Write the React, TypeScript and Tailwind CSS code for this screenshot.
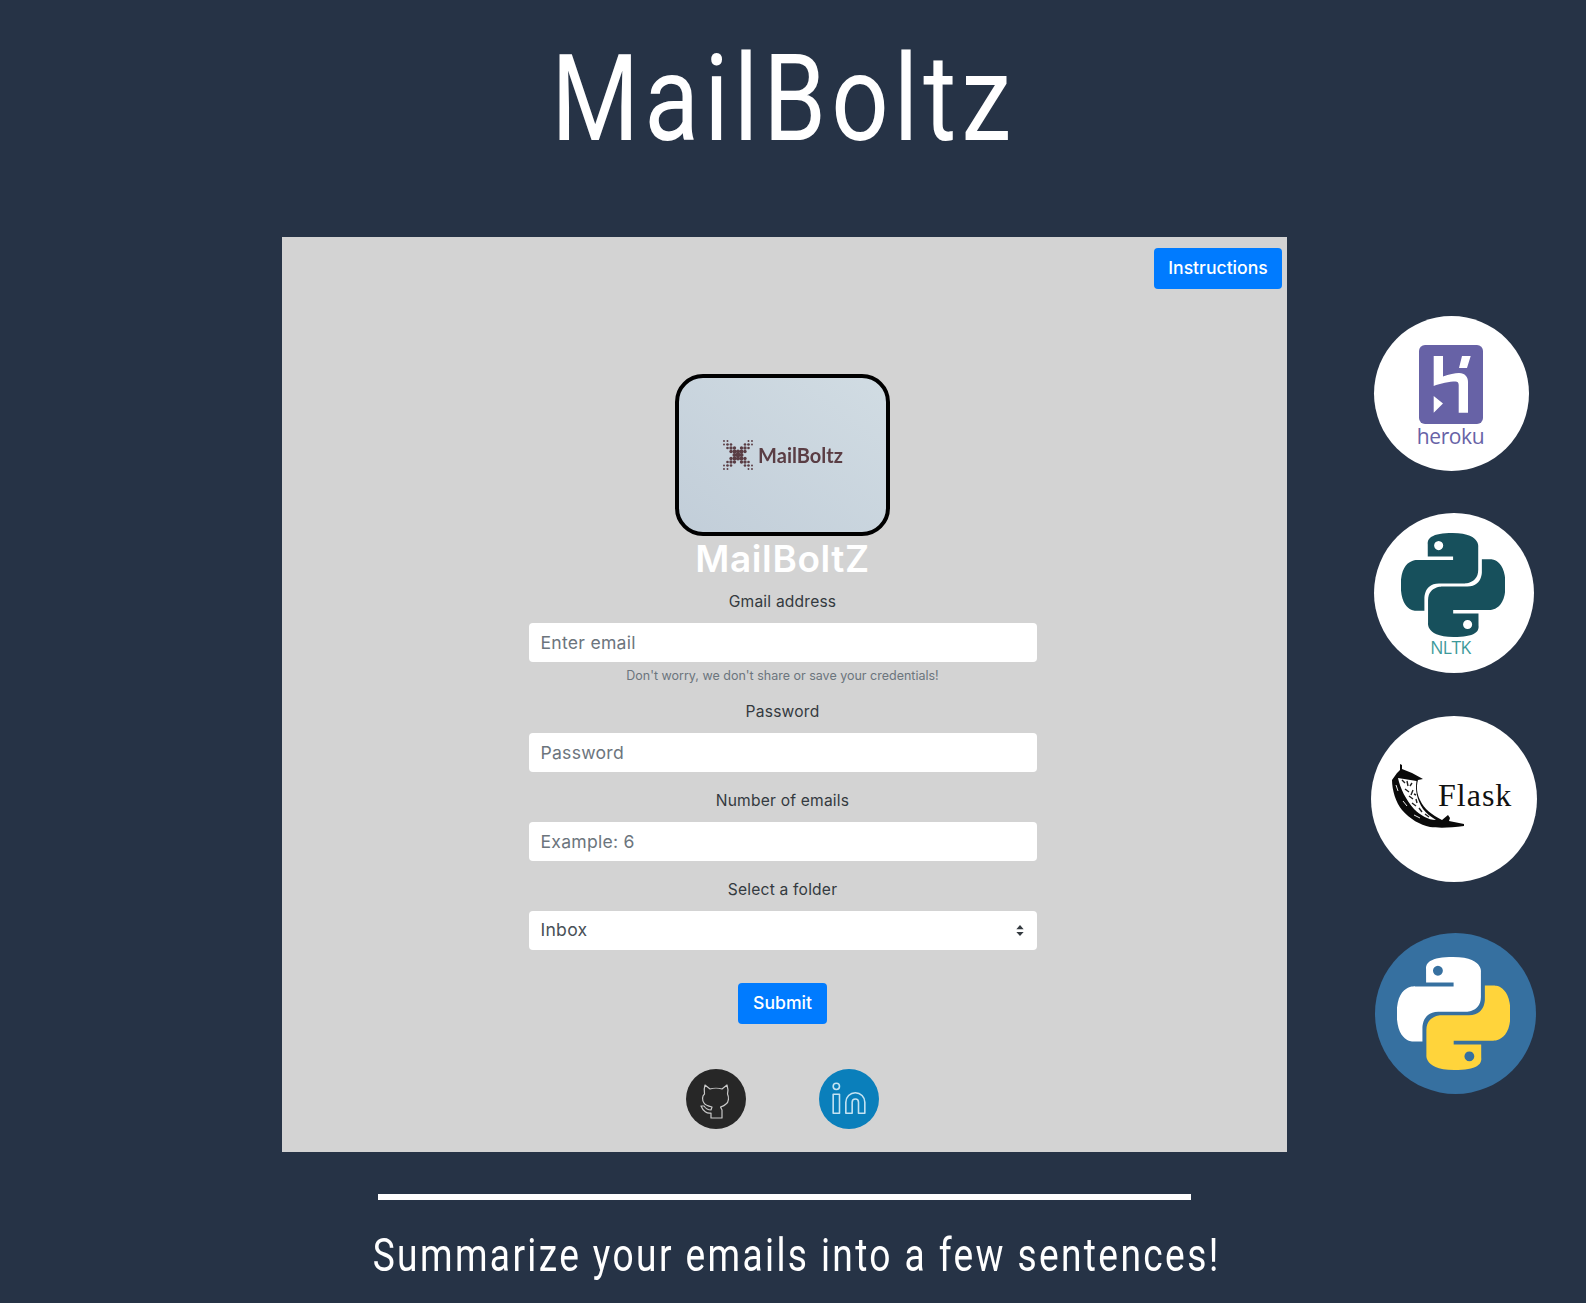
import React from "react";
import { Linkedin } from "lucide-react";

const PY_TOP =
  "M14.25.18l.9.2.73.26.59.3.45.32.34.34.25.34.16.33.1.3.04.26.02.2-.01.13V8.5l-.05.63-.13.55-.21.46-.26.38-.3.31-.33.25-.35.19-.35.14-.33.1-.3.07-.26.04-.21.02H8.77l-.69.05-.59.14-.5.22-.41.27-.33.32-.27.35-.2.36-.15.37-.1.35-.07.32-.04.27-.02.21v3.06H3.17l-.21-.03-.28-.07-.32-.12-.35-.18-.36-.26-.36-.36-.35-.46-.32-.59-.28-.73-.21-.88-.14-1.05-.05-1.23.06-1.22.16-1.04.24-.87.32-.71.36-.57.4-.44.42-.33.42-.24.4-.16.36-.1.32-.05.24-.01h.16l.06.01h8.16v-.83H6.18l-.01-2.75-.02-.37.05-.34.11-.31.17-.28.25-.26.31-.23.38-.2.44-.18.51-.15.58-.12.64-.1.71-.06.77-.04.84-.02 1.27.05zm-6.3 1.98l-.23.33-.08.41.08.41.23.34.33.22.41.09.41-.09.33-.22.23-.34.08-.41-.08-.41-.23-.33-.33-.22-.41-.09-.41.09z";
const PY_BOTTOM =
  "M21.1 6.11l.28.06.32.12.35.18.36.27.36.35.35.47.32.59.28.73.21.88.14 1.04.05 1.23-.06 1.23-.16 1.04-.24.86-.32.71-.36.57-.4.45-.42.33-.42.24-.4.16-.36.09-.32.05-.24.02-.16-.01h-8.22v.82h5.84l.01 2.76.02.36-.05.34-.11.31-.17.29-.25.25-.31.24-.38.2-.44.17-.51.15-.58.13-.64.09-.71.07-.77.04-.84.01-1.27-.04-1.07-.14-.9-.2-.73-.25-.59-.3-.45-.33-.34-.34-.25-.34-.16-.33-.1-.3-.04-.25-.02-.2.01-.13v-5.34l.05-.64.13-.54.21-.46.26-.38.3-.32.33-.24.35-.2.35-.14.33-.1.3-.06.26-.04.21-.02.13-.01h5.84l.69-.05.59-.14.5-.21.41-.28.33-.32.27-.35.2-.36.15-.36.1-.35.07-.32.04-.28.02-.21V6.07h2.09l.14.01zm-6.47 14.25l-.23.33-.08.41.08.41.23.33.33.23.41.08.41-.08.33-.23.23-.33.08-.41-.08-.41-.23-.33-.33-.23-.41-.08-.41.08z";

const PythonMark = ({ top, bottom, className }: { top: string; bottom: string; className: string }) => (
  <svg viewBox="0 0 24 24" className={className}>
    <path d={PY_TOP} fill={top} fillRule="evenodd" />
    <path d={PY_BOTTOM} fill={bottom} fillRule="evenodd" />
  </svg>
);

const HerokuCard = () => (
  <div className="ml-[87px] flex h-[155px] w-[155px] flex-col items-center rounded-full bg-white pr-[2px] pt-[29px]">
    <svg viewBox="0 0 64 79" className="h-[79px] w-[64px]">
      <rect width="64" height="79" rx="6" fill="#6762a6" />
      <path
        d="M14.7 11H24V31.5C30 29.5 36 28 40 28C46 28 49 32 49 37V67.7H39.7V40C39.7 37.5 38.5 36.5 36.5 36.5C31 36.5 21 38.5 14.7 41zM43 11H51.7L48 23H40zM14.7 51L24 58.5L14.7 67.7z"
        fill="#fff"
      />
    </svg>
    <span className="mt-[-1px] font-['Open_Sans',sans-serif] text-[21px] font-medium leading-[26px] tracking-[-0.4px] text-[#6762a6]">
      heroku
    </span>
  </div>
);

const NltkCard = () => (
  <div className="ml-[87px] mt-[42px] flex h-[160px] w-[160px] flex-col items-center rounded-full bg-white pr-[2px] pt-[20px]">
    <PythonMark top="#17505c" bottom="#17505c" className="h-[104px] w-[104px]" />
    <span className="mr-[5px] mt-[-1px] font-['Open_Sans',sans-serif] text-[17.5px] leading-[22px] tracking-[-0.5px] text-[#3d9a9a]">
      NLTK
    </span>
  </div>
);

const FlaskCard = () => (
  <div className="ml-[84px] mt-[43px] flex h-[166px] w-[166px] items-start rounded-full bg-white pl-[19px] pt-[47px]">
    <svg viewBox="0 0 76 66" className="h-[66px] w-[76px] shrink-0">
      <path
        d="M10 1L12 2L12 6L22 10L33 16L28 17C26 24 27 31 30 37C34 46 42 52 52 57L58 52L60 55L59 58L74 61L74 63C60 65 48 65 40 64C30 62 20 56 12 47C6 40 2 27 2 17L7 10L10 7z"
        fill="#0a0a0a"
      />
      <path d="M8 15L26.5 18C25 27 27 37 33 46C36 50 41 54 46 57C38 57 30 52 24 46C16 37 10 25 8 15z" fill="#fff" />
      <path d="M12 17l3 3M17 18l1 5M22 20l-2 3M15 26l4 3M23 27l-2 5M19 33l4 3M26 36l1 4M24 31l2 1M22 40l4 3M29 45l3 4M35 51l4 3" stroke="#222" strokeWidth="1.4" fill="none" />
      <path d="M6 22l2 6M13 38l4 5M24 52l6 3" stroke="#fff" strokeWidth="0.9" fill="none" />
    </svg>
    <span className="ml-[-28px] mt-[12px] font-['Liberation_Serif',serif] text-[32px] leading-[40px] tracking-[1px] text-[#111]">
      Flask
    </span>
  </div>
);

const GithubCat = () => (
  <svg viewBox="0 0 60 60" className="h-[60px] w-[60px]">
    <path
      d="M19 16L24 20C27 19 33 19 36 20L41 16C42 19 42 23 41.5 25C43 28 43 33 40 35C38 37 36 37.5 34.5 38L36 41V49H25V44C21 45 17 42 15 37L18 37C20 40 22 41 25 41L26 38C22 37 19 36 18 34C16 31 16 27 18.5 25C18 22 18 19 19 16Z"
      fill="none"
      stroke="#c9c9c9"
      strokeWidth="1.2"
      strokeLinejoin="round"
    />
  </svg>
);

const dots: [number, number][] = [];
for (let r = -4; r <= 4; r++) {
  for (let c = -4; c <= 4; c++) {
    if (Math.abs(Math.abs(r) - Math.abs(c)) <= 1) dots.push([c, r]);
  }
}

const LogoMark = () => (
  <svg viewBox="-16 -16 32 32" className="h-[32px] w-[32px] blur-[0.4px]">
    {dots.map(([c, r]) => (
      <circle key={`${c}-${r}`} cx={c * 3.5} cy={r * 3.5} r={2.4 - Math.max(Math.abs(c), Math.abs(r)) * 0.36} fill="#5a3d44" />
    ))}
  </svg>
);

const Field = ({ label, placeholder, className }: { label: string; placeholder: string; className: string }) => (
  <div className={`flex flex-col items-center ${className}`}>
    <label className="h-[24px] text-[15.6px] leading-[24px] tracking-[0.2px] text-[#343a40]">{label}</label>
    <input
      placeholder={placeholder}
      className="mt-[9px] h-[39px] w-[508px] rounded-[4px] bg-white px-[12px] text-[17.6px] tracking-[0.25px] text-[#495057] outline-none placeholder:text-[#6c757d]"
    />
  </div>
);

export default function App() {
  return (
    <div className="flex h-[1303px] w-full overflow-hidden bg-[#263346] pl-[282px] font-['Inter',sans-serif]">
      <main className="flex w-[1005px] shrink-0 flex-col items-center">
        <h1 className="mr-[2px] mt-[35px] h-[202px] scale-x-[0.84] font-['Roboto',sans-serif] text-[120px] font-normal leading-[128px] tracking-[6px] text-white">
          MailBoltz
        </h1>
        <section className="flex h-[915px] w-full flex-col items-center bg-[#d3d3d3] pr-[4px]">
          <button className="mr-[1px] mt-[11px] h-[41px] w-[128px] self-end rounded-[4px] bg-[#007bff] text-[17.6px] font-medium text-white">
            Instructions
          </button>
          <div className="mt-[85px] flex h-[162px] w-[215px] items-center justify-center gap-[4px] rounded-[28px] border-[4px] border-black bg-gradient-to-tr from-[#c2ced9] to-[#d1dce3]">
            <LogoMark />
            <span className="font-['Lato',sans-serif] text-[20px] font-bold leading-none text-[#5a3d44] blur-[0.3px]">MailBoltz</span>
          </div>
          <h2 className="h-[54px] text-[37px] font-semibold leading-[46px] tracking-[0.6px] text-white">MailBoltZ</h2>
          <Field label="Gmail address" placeholder="Enter email" className="" />
          <p className="mt-[5px] h-[16px] text-[12.5px] leading-[18px] text-[#6c757d]">
            Don&apos;t worry, we don&apos;t share or save your credentials!
          </p>
          <Field label="Password" placeholder="Password" className="mt-[17px]" />
          <Field label="Number of emails" placeholder="Example: 6" className="mt-[17px]" />
          <div className="mt-[17px] flex flex-col items-center">
            <label className="h-[24px] text-[15.6px] leading-[24px] tracking-[0.2px] text-[#343a40]">Select a folder</label>
            <div className="mt-[9px] flex h-[39px] w-[508px] items-center justify-between rounded-[4px] bg-white px-[12px] text-[17.6px] tracking-[0.25px] text-[#495057]">
              <span>Inbox</span>
              <svg viewBox="0 0 8 12" className="mr-[1px] h-[11px] w-[8px]">
                <path d="M4 0L8 4.5H0zM4 12L0 7.5h8z" fill="#343a40" />
              </svg>
            </div>
          </div>
          <button className="mt-[33px] h-[41px] w-[89px] rounded-[4px] bg-[#007bff] text-[17.6px] font-medium text-white">
            Submit
          </button>
          <div className="mt-[45px] flex gap-[73px]">
            <span className="flex h-[60px] w-[60px] items-center justify-center rounded-full bg-[#272727]">
              <GithubCat />
            </span>
            <span className="flex h-[60px] w-[60px] items-center justify-center rounded-full bg-[#0a7fbb]">
              <Linkedin size={38} strokeWidth={1} className="text-[#c5e3f2]" />
            </span>
          </div>
        </section>
        <hr className="mt-[42px] h-[6px] w-[813px] border-0 bg-white" />
        <p className="ml-[24px] mt-[25px] scale-x-[0.79] whitespace-nowrap font-['Roboto',sans-serif] text-[47px] font-normal leading-[60px] tracking-[3px] text-white">
          Summarize your emails into a few sentences!
        </p>
      </main>
      <aside className="flex flex-col items-start pt-[316px]">
        <HerokuCard />
        <NltkCard />
        <FlaskCard />
        <div className="ml-[88px] mt-[51px] flex h-[161px] w-[161px] items-center justify-center rounded-full bg-[#3670a0] pr-[4px]">
          <PythonMark top="#ffffff" bottom="#ffd43b" className="h-[113px] w-[113px]" />
        </div>
      </aside>
    </div>
  );
}
